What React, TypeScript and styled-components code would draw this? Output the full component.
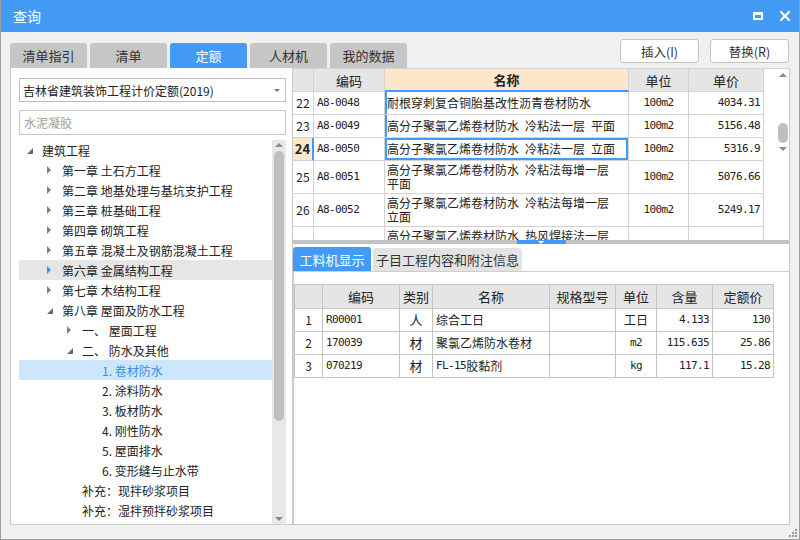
import { Fragment } from "react";
import styled, { createGlobalStyle } from "styled-components";

const BLUE = "#449bf6";
const CJK = `"Noto Sans CJK SC", "Microsoft YaHei", sans-serif`;
const MONO = `"DejaVu Sans Mono", "Noto Sans CJK SC", monospace`;
const GRID = "#d3d3d3";

const GlobalStyle = createGlobalStyle`
  html, body { margin: 0; padding: 0; background: #ffffff; }
  body { font-family: ${CJK}; font-size: 12px; color: #222222; }
  *, *::before, *::after { box-sizing: border-box; }
`;

// ─── Window frame ────────────────────────────────
const Root = styled.div`
  position: relative;
  width: 800px;
  height: 540px;
  display: flex;
  flex-direction: column;
  background: #f0f0f0;
  border: 1px solid #9e9e9e;
  border-top: none;
  overflow: hidden;
`;

const TitleBar = styled.div`
  height: 32px;
  flex-shrink: 0;
  display: flex;
  align-items: center;
  padding: 0 9px 0 12px;
  background: ${BLUE};
  color: #ffffff;
  font-size: 14px;
`;

const TitleText = styled.span`flex: 1;`;

const TitleControls = styled.div`
  display: flex;
  align-items: center;
  gap: 17px;
`;

const Body = styled.div`
  flex: 1;
  min-height: 0;
  display: flex;
  flex-direction: column;
  padding: 7px 9px 14px 9px;
`;

// ─── Top tabs + buttons ──────────────────────────
const TopRow = styled.div`
  height: 29px;
  flex-shrink: 0;
  display: flex;
  align-items: flex-start;
`;

const TabStrip = styled.div`
  align-self: flex-end;
  display: flex;
  gap: 3px;
`;

const Tab = styled.div<{ $active?: boolean }>`
  width: 77px;
  height: 25px;
  display: flex;
  align-items: center;
  justify-content: center;
  border-radius: 3px 3px 0 0;
  font-size: 13px;
  background: ${(p) => (p.$active ? BLUE : "#c6c6c6")};
  color: ${(p) => (p.$active ? "#ffffff" : "#333333")};
`;

const ButtonGroup = styled.div`
  margin-left: auto;
  margin-right: 1px;
  display: flex;
  gap: 11px;
`;

const ActionBtn = styled.button`
  width: 79px;
  height: 24px;
  background: #ffffff;
  border: 1px solid #c4c4c4;
  border-radius: 3px;
  font-family: ${CJK};
  font-size: 12.5px;
  color: #333333;
  padding: 0;
`;

const Content = styled.div`
  flex: 1;
  min-height: 0;
  display: flex;
`;

// ─── Left panel ──────────────────────────────────
const LeftPanel = styled.div`
  width: 282px;
  flex-shrink: 0;
  display: flex;
  flex-direction: column;
  background: #ffffff;
  border-left: 1px solid #cdcdcd;
  border-bottom: 1px solid #cdcdcd;
  padding: 10px 6px 0 8px;
`;

const SelectBox = styled.div`
  height: 24px;
  flex-shrink: 0;
  display: flex;
  align-items: center;
  padding: 0 5px 0 3px;
  border: 1px solid #bdbdbd;
  font-size: 12px;
  color: #222222;
  span { flex: 1; }
  &::after {
    content: "";
    border-left: 3px solid transparent;
    border-right: 3px solid transparent;
    border-top: 3px solid #777777;
  }
`;

const SearchBox = styled.input`
  height: 25px;
  flex-shrink: 0;
  margin-top: 8px;
  border: 1px solid #c8c8c8;
  padding: 0 4px;
  font-family: ${CJK};
  font-size: 12px;
  outline: none;
  &::placeholder { color: #a0a0a0; }
`;

const Tree = styled.div`
  flex: 1;
  min-height: 0;
  margin-top: 5px;
  display: flex;
`;

const TreeList = styled.div`
  flex: 1;
  overflow: hidden;
`;

const TreeRow = styled.div<{ $level: number; $state?: "hover" | "selected" }>`
  height: 20px;
  display: flex;
  align-items: center;
  padding-left: ${(p) => 7 + p.$level * 20}px;
  white-space: nowrap;
  background: ${(p) => (p.$state === "hover" ? "#e6e6e6" : p.$state === "selected" ? "#cce6fb" : "transparent")};
  color: ${(p) => (p.$state === "selected" ? "#3a8ee6" : "#222222")};
`;

const TreeArrow = styled.span<{ $kind: "open" | "closed" | "none"; $hot?: boolean }>`
  width: 16px;
  height: 20px;
  flex-shrink: 0;
  display: flex;
  align-items: center;
  padding-left: 1px;
  &::after {
    content: "";
    display: ${(p) => (p.$kind === "none" ? "none" : "block")};
    ${(p) =>
      p.$kind === "open"
        ? `border-left: 6px solid transparent; border-bottom: 6px solid #6a6a6a; margin-top: 1px;`
        : `border-top: 4px solid transparent; border-bottom: 4px solid transparent; border-left: 4px solid ${p.$hot ? "#3c91e6" : "#808080"};`}
  }
`;

// ─── Scrollbars ──────────────────────────────────
const VScroll = styled.div<{ $bg: string; $w: number }>`
  width: ${(p) => p.$w}px;
  flex-shrink: 0;
  display: flex;
  flex-direction: column;
  background: ${(p) => p.$bg};
`;

const ScrollArrow = styled.div<{ $down?: boolean; $h: number }>`
  height: ${(p) => p.$h}px;
  flex-shrink: 0;
  display: flex;
  align-items: center;
  justify-content: center;
  &::after {
    content: "";
    border-left: 4px solid transparent;
    border-right: 4px solid transparent;
    ${(p) => (p.$down ? "border-top: 4px solid #8a8a8a;" : "border-bottom: 4px solid #8a8a8a;")}
  }
`;

const ScrollTrack = styled.div`
  flex: 1;
  display: flex;
  justify-content: center;
  align-items: flex-start;
`;

const Thumb = styled.div<{ $top: number; $h: number }>`
  margin-top: ${(p) => p.$top}px;
  width: 10px;
  height: ${(p) => p.$h}px;
  border-radius: 5px;
  background: #bfbfbf;
`;

// ─── Right panel ─────────────────────────────────
const RightPanel = styled.div`
  flex: 1;
  min-width: 0;
  display: flex;
  flex-direction: column;
  border-left: 1px solid #c8c8c8;
  border-right: 1px solid #c8c8c8;
  border-bottom: 1px solid #c8c8c8;
  background: #ffffff;
`;

const UpperSection = styled.div`
  height: 172px;
  flex-shrink: 0;
  display: flex;
  align-items: flex-start;
  border-top: 1px solid ${GRID};
  overflow: hidden;
`;

const UpperGrid = styled.div`
  flex-shrink: 0;
  display: grid;
  grid-template-columns: 21px 71px 244px 60px 75px;
  grid-template-rows: 23px 23px 23px 23px 33px 33px 33px;
`;

const Spacer = styled.div`flex: 1;`;

const Cell = styled.div<{ $align?: "left" | "center" | "right"; $mono?: boolean }>`
  display: flex;
  align-items: center;
  justify-content: ${(p) => (p.$align === "center" ? "center" : p.$align === "right" ? "flex-end" : "flex-start")};
  padding: 0 3px;
  border-right: 1px solid ${GRID};
  border-bottom: 1px solid ${GRID};
  overflow: hidden;
  white-space: pre-line;
  line-height: 14px;
  font-family: ${(p) => (p.$mono ? MONO : CJK)};
  font-size: ${(p) => (p.$mono ? "11px" : "12px")};
  letter-spacing: ${(p) => (p.$mono ? "-0.6px" : "0")};
`;

const HeadCell = styled.div<{ $accent?: boolean }>`
  display: flex;
  align-items: center;
  justify-content: center;
  font-size: 13px;
  background: ${(p) => (p.$accent ? "#fde7ca" : "#e5e5e5")};
  font-weight: ${(p) => (p.$accent ? 700 : 400)};
  border-right: 1px solid ${GRID};
  border-bottom: ${(p) => (p.$accent ? `2px solid ${BLUE}` : `1px solid ${GRID}`)};
`;

const RowNo = styled(Cell)<{ $current?: boolean }>`
  padding: 0;
  justify-content: center;
  font-family: ${CJK};
  letter-spacing: 0;
  background: ${(p) => (p.$current ? "#fde7ca" : "#ffffff")};
  font-weight: ${(p) => (p.$current ? 700 : 400)};
  font-size: ${(p) => (p.$current ? "13px" : "12px")};
  border-right: ${(p) => (p.$current ? `2px solid ${BLUE}` : `1px solid ${GRID}`)};
`;

const NameCell = styled(Cell)<{ $mark?: boolean; $selected?: boolean }>`
  padding-left: 2px;
  box-shadow: ${(p) => (p.$selected ? `inset 0 0 0 2px ${BLUE}` : p.$mark ? `inset 2px 0 0 ${BLUE}` : "none")};
`;

const Splitter = styled.div`
  height: 4px;
  flex-shrink: 0;
  display: flex;
  justify-content: center;
  background: #c3c3c3;
`;

const SplitHandle = styled.div`
  width: 49px;
  height: 4px;
  background: ${BLUE};
  display: flex;
  justify-content: center;
  align-items: center;
  &::after {
    content: "";
    border-left: 3px solid transparent;
    border-right: 3px solid transparent;
    border-top: 3px solid #ffffff;
  }
`;

const LowerSection = styled.div`
  flex: 1;
  min-height: 0;
  display: flex;
  flex-direction: column;
  background: #ffffff;
`;

const SubTabs = styled.div`
  height: 27px;
  flex-shrink: 0;
  display: flex;
  align-items: flex-end;
  gap: 2px;
`;

const SubTab = styled.div<{ $active?: boolean; $w: number }>`
  width: ${(p) => p.$w}px;
  height: ${(p) => (p.$active ? 24 : 23)}px;
  display: flex;
  align-items: center;
  justify-content: center;
  border-radius: 3px 3px 0 0;
  font-size: 13px;
  background: ${(p) => (p.$active ? BLUE : "#e3e3e3")};
  color: ${(p) => (p.$active ? "#ffffff" : "#333333")};
`;

const LowerBody = styled.div`
  flex: 1;
  min-height: 0;
  border-top: 1px solid #cfcfcf;
  border-left: 1px solid #cfcfcf;
  padding-top: 12px;
`;

const LowerGrid = styled.div`
  display: grid;
  width: max-content;
  grid-template-columns: 28px 77px 33px 117px 66px 41px 56px 61px;
  grid-template-rows: 24px 23px 23px 23px;
  border-top: 1px solid #c4c4c4;
  border-left: 1px solid #c4c4c4;
`;

const LowCell = styled(Cell)<{ $big?: boolean }>`
  border-right-color: #c4c4c4;
  border-bottom-color: #c4c4c4;
  ${(p) => (p.$big ? "font-size: 13px;" : "")}
`;

const LowHead = styled(HeadCell)`
  border-right-color: #c4c4c4;
  border-bottom-color: #c4c4c4;
`;

const Mono = styled.span`
  font-family: ${MONO};
  font-size: 11px;
  letter-spacing: -0.6px;
`;

const Grip = styled.svg`
  position: absolute;
  right: 2px;
  bottom: 2px;
`;

// ─── Data ────────────────────────────────────────
type TreeItem = { level: number; arrow: "open" | "closed" | "none"; text: string; state?: "hover" | "selected" };

const treeItems: TreeItem[] = [
  { level: 0, arrow: "open", text: "建筑工程" },
  { level: 1, arrow: "closed", text: "第一章 土石方工程" },
  { level: 1, arrow: "closed", text: "第二章 地基处理与基坑支护工程" },
  { level: 1, arrow: "closed", text: "第三章 桩基础工程" },
  { level: 1, arrow: "closed", text: "第四章 砌筑工程" },
  { level: 1, arrow: "closed", text: "第五章 混凝土及钢筋混凝土工程" },
  { level: 1, arrow: "closed", text: "第六章 金属结构工程", state: "hover" },
  { level: 1, arrow: "closed", text: "第七章 木结构工程" },
  { level: 1, arrow: "open", text: "第八章 屋面及防水工程" },
  { level: 2, arrow: "closed", text: "一、 屋面工程" },
  { level: 2, arrow: "open", text: "二、 防水及其他" },
  { level: 3, arrow: "none", text: "1. 卷材防水", state: "selected" },
  { level: 3, arrow: "none", text: "2. 涂料防水" },
  { level: 3, arrow: "none", text: "3. 板材防水" },
  { level: 3, arrow: "none", text: "4. 刚性防水" },
  { level: 3, arrow: "none", text: "5. 屋面排水" },
  { level: 3, arrow: "none", text: "6. 变形缝与止水带" },
  { level: 2, arrow: "none", text: "补充：现拌砂浆项目" },
  { level: 2, arrow: "none", text: "补充：湿拌预拌砂浆项目" },
  { level: 2, arrow: "none", text: "补充：现拌混凝土项目" },
];

const S = "\u2002";
const upperRows = [
  { no: "22", code: "A8-0048", name: "耐根穿刺复合铜胎基改性沥青卷材防水", unit: "100m2", price: "4034.31", mark: true },
  { no: "23", code: "A8-0049", name: `高分子聚氯乙烯卷材防水${S}冷粘法一层${S}平面`, unit: "100m2", price: "5156.48", mark: true },
  { no: "24", code: "A8-0050", name: `高分子聚氯乙烯卷材防水${S}冷粘法一层${S}立面`, unit: "100m2", price: "5316.9", current: true },
  { no: "25", code: "A8-0051", name: `高分子聚氯乙烯卷材防水${S}冷粘法每增一层\n平面`, unit: "100m2", price: "5076.66" },
  { no: "26", code: "A8-0052", name: `高分子聚氯乙烯卷材防水${S}冷粘法每增一层\n立面`, unit: "100m2", price: "5249.17" },
  { no: "", code: "", name: `高分子聚氯乙烯卷材防水${S}热风焊接法一层\n平面`, unit: "", price: "" },
];

const lowerRows = [
  { no: "1", code: "R00001", kind: "人", name: <>综合工日</>, unit: <>工日</>, qty: "4.133", price: "130" },
  { no: "2", code: "170039", kind: "材", name: <>聚氯乙烯防水卷材</>, unit: <Mono>m2</Mono>, qty: "115.635", price: "25.86" },
  { no: "3", code: "070219", kind: "材", name: <><Mono>FL-15</Mono>胶黏剂</>, unit: <Mono>kg</Mono>, qty: "117.1", price: "15.28" },
];

// ─── Component ───────────────────────────────────
export default function App() {
  return (
    <>
      <GlobalStyle />
      <Root>
        <TitleBar>
          <TitleText>查询</TitleText>
          <TitleControls>
            <svg width="10" height="8" viewBox="0 0 10 8">
              <rect x="1" y="1" width="8" height="6" fill="none" stroke="#ffffff" strokeWidth="2" />
              <rect x="0" y="0" width="10" height="3" fill="#ffffff" />
            </svg>
            <svg width="10" height="10" viewBox="0 0 10 10">
              <path d="M1 1 L9 9 M9 1 L1 9" stroke="#ffffff" strokeWidth="2.2" strokeLinecap="square" />
            </svg>
          </TitleControls>
        </TitleBar>

        <Body>
          <TopRow>
            <TabStrip>
              <Tab>清单指引</Tab>
              <Tab>清单</Tab>
              <Tab $active>定额</Tab>
              <Tab>人材机</Tab>
              <Tab>我的数据</Tab>
            </TabStrip>
            <ButtonGroup>
              <ActionBtn>插入(I)</ActionBtn>
              <ActionBtn>替换(R)</ActionBtn>
            </ButtonGroup>
          </TopRow>

          <Content>
            {/* ── Left: quota tree ── */}
            <LeftPanel>
              <SelectBox>
                <span>吉林省建筑装饰工程计价定额(2019)</span>
              </SelectBox>
              <SearchBox placeholder="水泥凝胶" readOnly />
              <Tree>
                <TreeList>
                  {treeItems.map((t, i) => (
                    <TreeRow key={i} $level={t.level} $state={t.state}>
                      <TreeArrow $kind={t.arrow} $hot={t.state === "hover"} />
                      <span>{t.text}</span>
                    </TreeRow>
                  ))}
                </TreeList>
                <VScroll $bg="#e8e8e8" $w={14}>
                  <ScrollArrow $h={10} />
                  <ScrollTrack>
                    <Thumb $top={1} $h={270} />
                  </ScrollTrack>
                  <ScrollArrow $h={10} $down />
                </VScroll>
              </Tree>
            </LeftPanel>

            {/* ── Right: quota list + details ── */}
            <RightPanel>
              <UpperSection>
                <UpperGrid>
                  <HeadCell />
                  <HeadCell>编码</HeadCell>
                  <HeadCell $accent>名称</HeadCell>
                  <HeadCell>单位</HeadCell>
                  <HeadCell>单价</HeadCell>
                  {upperRows.map((r, i) => (
                    <Fragment key={i}>
                      <RowNo $current={r.current}>{r.no}</RowNo>
                      <Cell $mono>{r.code}</Cell>
                      <NameCell $mark={r.mark} $selected={r.current}>{r.name}</NameCell>
                      <Cell $mono $align="center">{r.unit}</Cell>
                      <Cell $mono $align="right">{r.price}</Cell>
                    </Fragment>
                  ))}
                </UpperGrid>
                <Spacer />
                <VScroll $bg="#ffffff" $w={13}>
                  <ScrollArrow $h={12} />
                  <ScrollTrack>
                    <Thumb $top={42} $h={20} />
                  </ScrollTrack>
                  <ScrollArrow $h={12} $down />
                </VScroll>
              </UpperSection>

              <Splitter>
                <SplitHandle />
              </Splitter>

              <LowerSection>
                <SubTabs>
                  <SubTab $active $w={78}>工料机显示</SubTab>
                  <SubTab $w={149}>子目工程内容和附注信息</SubTab>
                </SubTabs>
                <LowerBody>
                  <LowerGrid>
                    <LowHead />
                    <LowHead>编码</LowHead>
                    <LowHead>类别</LowHead>
                    <LowHead>名称</LowHead>
                    <LowHead>规格型号</LowHead>
                    <LowHead>单位</LowHead>
                    <LowHead>含量</LowHead>
                    <LowHead>定额价</LowHead>
                    {lowerRows.map((r, i) => (
                      <Fragment key={i}>
                        <LowCell $align="center">{r.no}</LowCell>
                        <LowCell $mono>{r.code}</LowCell>
                        <LowCell $align="center" $big>{r.kind}</LowCell>
                        <LowCell>{r.name}</LowCell>
                        <LowCell />
                        <LowCell $align="center">{r.unit}</LowCell>
                        <LowCell $mono $align="right">{r.qty}</LowCell>
                        <LowCell $mono $align="right">{r.price}</LowCell>
                      </Fragment>
                    ))}
                  </LowerGrid>
                </LowerBody>
              </LowerSection>
            </RightPanel>
          </Content>
        </Body>

        <Grip width="8" height="8" viewBox="0 0 8 8">
          <rect x="6" y="0" width="2" height="2" fill="#9a9a9a" />
          <rect x="3" y="3" width="2" height="2" fill="#9a9a9a" />
          <rect x="6" y="3" width="2" height="2" fill="#9a9a9a" />
          <rect x="0" y="6" width="2" height="2" fill="#9a9a9a" />
          <rect x="3" y="6" width="2" height="2" fill="#9a9a9a" />
          <rect x="6" y="6" width="2" height="2" fill="#9a9a9a" />
        </Grip>
      </Root>
    </>
  );
}
